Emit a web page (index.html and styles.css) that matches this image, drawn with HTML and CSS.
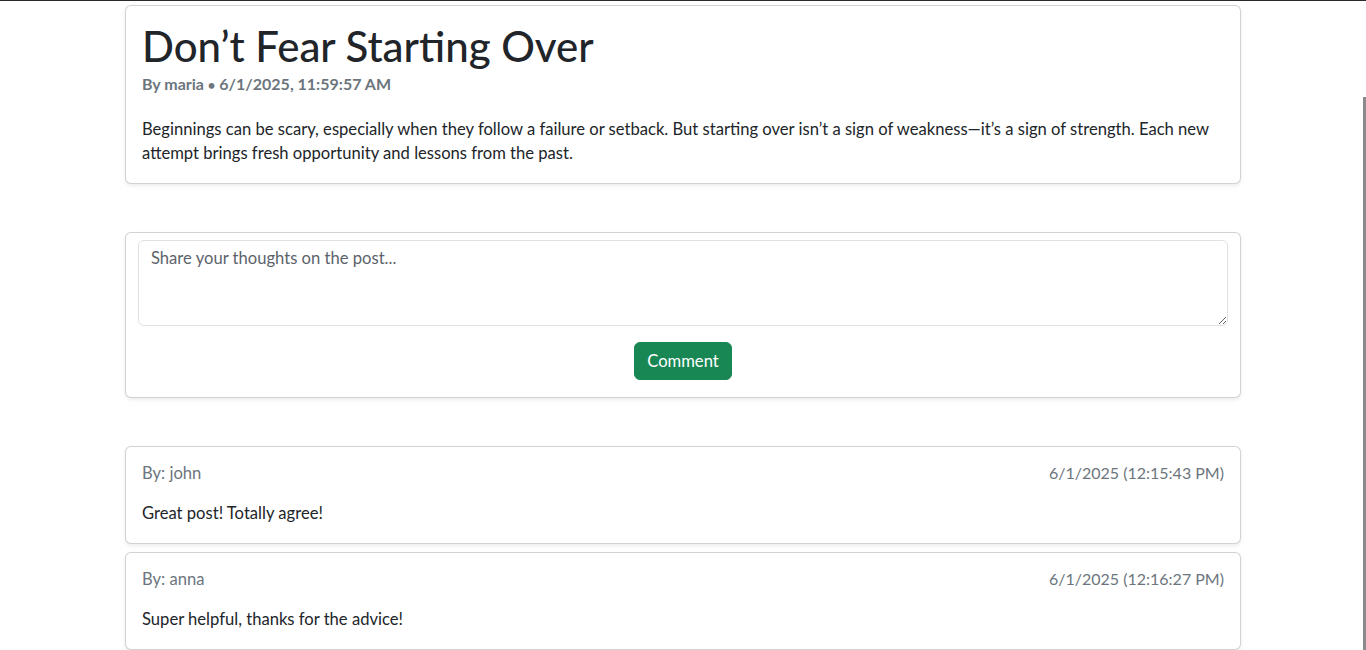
FILE: index.html
```html
<!DOCTYPE html>
<html lang="en">
<head>
<meta charset="utf-8">
<title>Don’t Fear Starting Over</title>
<link rel="stylesheet" href="styles.css">
</head>
<body>
<div class="topline"></div>
<main class="container">
  <article class="card post">
    <div class="card-body">
      <h1 class="post-title">Don’t Fear Starting Over</h1>
      <h6 class="post-meta">By maria <span class="dot">•</span> 6/1/2025, 11:59:57 AM</h6>
      <p class="post-text">Beginnings can be scary, especially when they follow a failure or setback. But starting over isn’t a sign of weakness—it’s a sign of strength. Each new attempt brings fresh opportunity and lessons from the past.</p>
    </div>
  </article>

  <form class="card comment-form">
    <textarea class="comment-input" placeholder="Share your thoughts on the post..."></textarea>
    <div class="form-actions">
      <button type="button" class="btn-comment">Comment</button>
    </div>
  </form>

  <section class="comments">
    <div class="card comment">
      <div class="comment-head">
        <span class="comment-author">By: john</span>
        <span class="comment-date">6/1/2025 (12:15:43 PM)</span>
      </div>
      <p class="comment-text">Great post! Totally agree!</p>
    </div>
    <div class="card comment">
      <div class="comment-head">
        <span class="comment-author">By: anna</span>
        <span class="comment-date">6/1/2025 (12:16:27 PM)</span>
      </div>
      <p class="comment-text">Super helpful, thanks for the advice!</p>
    </div>
  </section>
</main>
<div class="scroll-thumb"></div>
</body>
</html>
```

FILE: styles.css
```css
* { box-sizing: border-box; }

html, body {
  margin: 0;
  padding: 0;
  background: #fff;
}

body {
  font-family: Lato, "Noto Sans", sans-serif;
  font-size: 16.6px;
  line-height: 24px;
  color: #212529;
  overflow: hidden;
}

.topline {
  height: 1px;
  background: #2b2b2b;
}

.container {
  width: 1116px;
  margin: 4px auto 0;
}

.card {
  background: #fff;
  border: 1px solid rgba(0, 0, 0, 0.175);
  border-radius: 6px;
  box-shadow: 0 2px 4px rgba(0, 0, 0, 0.075);
}

.card-body {
  padding: 16px 16px 18px;
}

.post-title {
  margin: 0;
  font-size: 42px;
  line-height: 48px;
  font-weight: 500;
  color: #212529;
}

.post-meta {
  margin: 2px 0 21px;
  font-size: 16px;
  line-height: 24px;
  font-weight: 700;
  color: #6c757d;
}

.post-meta .dot {
  font-size: 13px;
  line-height: 0;
}

.post-text {
  margin: 0;
}

.comment-form {
  margin-top: 48px;
  padding: 7px 12px 17px;
  display: flex;
  flex-direction: column;
  gap: 16px;
}

.comment-input {
  display: block;
  width: 100%;
  height: 86px;
  padding: 5px 12px 7px;
  border: 1px solid #dee2e6;
  border-radius: 6px;
  font: inherit;
  color: #212529;
  resize: vertical;
}

.comment-input::placeholder {
  color: #5c636a;
}

.form-actions {
  display: flex;
  justify-content: center;
}

.btn-comment {
  width: 98px;
  height: 38px;
  padding: 6px 12px;
  border: 1px solid #198754;
  border-radius: 6px;
  background: #198754;
  color: #fff;
  font: inherit;
}

.comments {
  margin-top: 48px;
  display: flex;
  flex-direction: column;
  gap: 8px;
}

.comment {
  padding: 14px 16px 18px;
}

.comment-head {
  display: flex;
  justify-content: space-between;
  color: #6c757d;
}

.comment-date {
  font-size: 16px;
}

.comment-text {
  margin: 16px 0 0;
}

.scroll-thumb {
  position: fixed;
  right: 0;
  top: 97px;
  bottom: 0;
  width: 3px;
  background: #8a8a8a;
}
```
